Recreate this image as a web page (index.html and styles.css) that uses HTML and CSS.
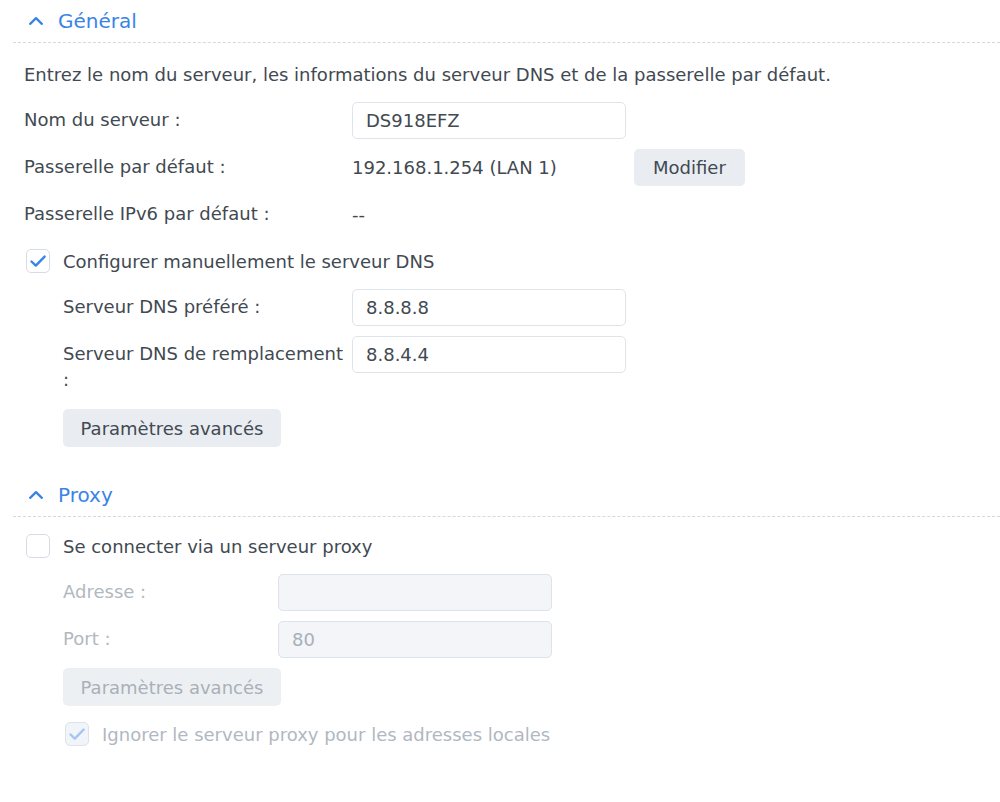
FILE: index.html
```html
<!DOCTYPE html>
<html lang="fr">
<head>
    <meta charset="UTF-8">
    <title>Réseau - Général</title>
    <link rel="stylesheet" href="styles.css">
</head>
<body>

    <!-- Général -->
    <section class="panel">
        <div class="panel-head">
            <svg class="chevron" width="14" height="8" viewBox="0 0 14 8"><polyline points="1.2,6.8 7,1.2 12.8,6.8"/></svg>
            <span>Général</span>
        </div>
        <div class="panel-body">
            <p class="desc">Entrez le nom du serveur, les informations du serveur DNS et de la passerelle par défaut.</p>

            <div class="row">
                <label class="lbl">Nom du serveur :</label>
                <input class="field" type="text" value="DS918EFZ">
            </div>
            <div class="row">
                <label class="lbl">Passerelle par défaut :</label>
                <span class="value">192.168.1.254 (LAN 1)</span>
                <button class="btn">Modifier</button>
            </div>
            <div class="row">
                <label class="lbl">Passerelle IPv6 par défaut :</label>
                <span class="value">--</span>
            </div>

            <div class="row check-row">
                <span class="box checked">
                    <svg width="24" height="24" viewBox="0 0 24 24"><polyline points="5.5,12.5 9.8,16.6 18.6,7.6"/></svg>
                </span>
                <span class="check-lbl">Configurer manuellement le serveur DNS</span>
            </div>

            <div class="indent">
                <div class="row">
                    <label class="lbl">Serveur DNS préféré :</label>
                    <input class="field" type="text" value="8.8.8.8">
                </div>
                <div class="row">
                    <label class="lbl">Serveur DNS de remplacement :</label>
                    <input class="field" type="text" value="8.8.4.4">
                </div>
                <div class="row">
                    <button class="btn btn-wide">Paramètres avancés</button>
                </div>
            </div>
        </div>
    </section>

    <!-- Proxy -->
    <section class="panel">
        <div class="panel-head">
            <svg class="chevron" width="14" height="8" viewBox="0 0 14 8"><polyline points="1.2,6.8 7,1.2 12.8,6.8"/></svg>
            <span>Proxy</span>
        </div>
        <div class="panel-body">
            <div class="row check-row">
                <span class="box"></span>
                <span class="check-lbl">Se connecter via un serveur proxy</span>
            </div>

            <div class="indent proxy">
                <div class="row">
                    <label class="lbl disabled">Adresse :</label>
                    <input class="field" type="text" value="" disabled>
                </div>
                <div class="row">
                    <label class="lbl disabled">Port :</label>
                    <input class="field" type="text" value="80" disabled>
                </div>
                <div class="row">
                    <button class="btn btn-wide" disabled>Paramètres avancés</button>
                </div>
                <div class="row check-row">
                    <span class="box checked off">
                        <svg width="24" height="24" viewBox="0 0 24 24"><polyline points="5.5,12.5 9.8,16.6 18.6,7.6"/></svg>
                    </span>
                    <span class="check-lbl disabled">Ignorer le serveur proxy pour les adresses locales</span>
                </div>
            </div>
        </div>
    </section>

</body>
</html>
```

FILE: styles.css
```css
body {
    margin: 0;
    padding: 0;
    background: #fff;
    font-family: 'DejaVu Sans', Verdana, sans-serif;
    font-size: 18px;
    color: #414951;
}

/* sections repliables */
.panel { margin-left: 13px; }
.panel-head {
    display: flex;
    align-items: center;
    height: 42px;
    padding-left: 16px;
    border-bottom: 1px dashed #d3d9e0;
    color: #3a84e6;
    font-size: 20px;
}
.chevron { margin-right: 15px; }
.chevron polyline { fill: none; stroke: #3a84e6; stroke-width: 2.3; stroke-linecap: round; stroke-linejoin: round; }
.panel-body { padding: 11px 0 17px 11px; }

.desc { margin: 0 0 16px; padding-top: 10px; line-height: 22px; }

/* lignes de formulaire */
.row {
    display: flex;
    align-items: flex-start;
    min-height: 37px;
    margin-bottom: 10px;
}
.lbl {
    width: 328px;
    flex-shrink: 0;
    padding: 5px 0 6px;
    line-height: 26px;
}
.indent { padding-left: 39px; }
.indent .lbl { width: 289px; }
.indent.proxy .lbl { width: 215px; }

.value { width: 282px; line-height: 37px; }

.field {
    box-sizing: border-box;
    width: 274px;
    height: 37px;
    padding: 0 13px;
    border: 1px solid #dfe4ea;
    border-radius: 5px;
    font-family: inherit;
    font-size: 18px;
    color: #414951;
    background: #fff;
    outline: none;
}
.field:disabled { background: #f3f5f8; color: #a9b0b8; border-color: #dde3ea; }

.btn {
    height: 37px;
    padding: 0 19px;
    border: none;
    border-radius: 5px;
    background: #e9edf1;
    font-family: inherit;
    font-size: 18px;
    color: #414951;
}
.btn-wide { height: 38px; width: 218px; padding: 0; }
.btn:disabled { background: #edf0f3; color: #a9b0b8; }

/* cases à cocher */
.check-row { align-items: center; min-height: 36px; }
.box {
    box-sizing: border-box;
    width: 24px;
    height: 24px;
    margin-left: 2px;
    margin-right: 13px;
    border: 1px solid #d5dce4;
    border-radius: 5px;
    background: #fff;
    flex-shrink: 0;
    display: flex;
    align-items: center;
    justify-content: center;
}
.box svg { margin: -1px; }
.box polyline { fill: none; stroke: #3a84e6; stroke-width: 2.4; stroke-linecap: round; stroke-linejoin: round; }
.box.off { background: #f1f4f8; border-color: #dde3ea; }
.box.off polyline { stroke: #a6c6f2; }

.disabled { color: #b1b8bf; }
```
